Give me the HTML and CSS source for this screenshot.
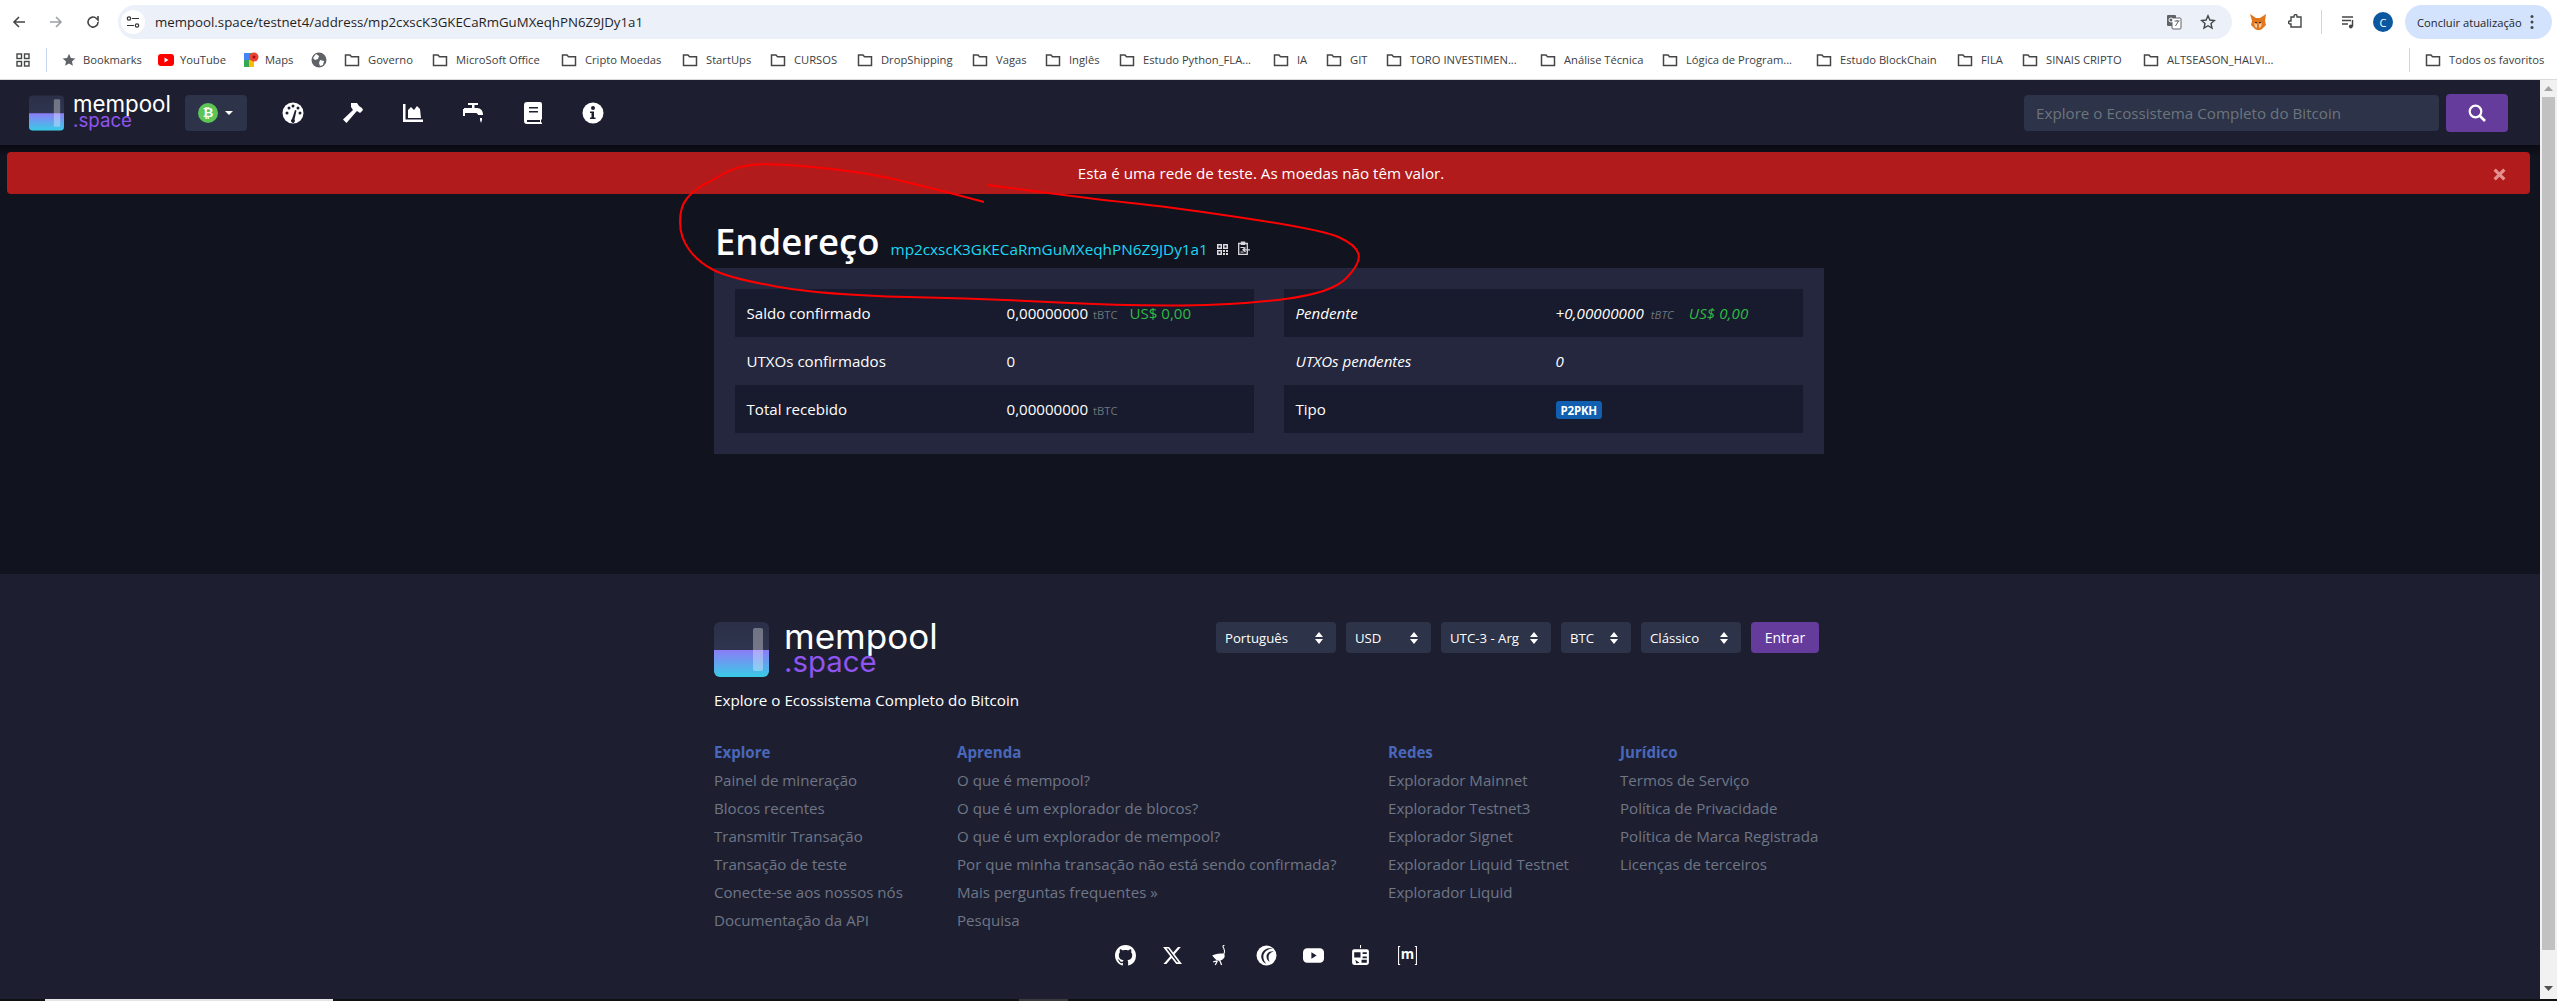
FILE: index.html
```html
<!DOCTYPE html>
<html lang="pt-BR">
<head>
<meta charset="utf-8">
<title>Endereço - mempool</title>
<link rel="stylesheet" href="styles.css">
</head>
<body>
<div class="toolbar">
  <div class="nav-btns">
    <svg class="ic16" viewBox="0 0 16 16"><path d="M14 8H3M8 3 3 8l5 5" fill="none" stroke="#444746" stroke-width="1.6"/></svg>
    <svg class="ic16" viewBox="0 0 16 16"><path d="M2 8h11M8 3l5 5-5 5" fill="none" stroke="#9aa0a6" stroke-width="1.6"/></svg>
    <svg class="ic16" viewBox="0 0 16 16"><path d="M13 8a5 5 0 1 1-1.5-3.5L13 6V2" fill="none" stroke="#444746" stroke-width="1.6"/></svg>
  </div>
  <div class="omnibox">
    <span class="tune"><svg class="ic14" viewBox="0 0 14 14"><g fill="none" stroke="#333" stroke-width="1.2"><circle cx="3" cy="3.5" r="1.7"/><path d="M6 3.5h7M1 10.5h7"/><circle cx="11" cy="10.5" r="1.7"/></g></svg></span>
    <span class="url">mempool.space/testnet4/address/mp2cxscK3GKECaRmGuMXeqhPN6Z9JDy1a1</span>
    <svg class="ic16 tr" viewBox="0 0 16 16"><rect x="1" y="1" width="9" height="11" rx="1" fill="#5f6368"/><rect x="6" y="4" width="9" height="11" rx="1" fill="#fff" stroke="#5f6368"/><path d="M8.500 7h5M11 6v1M9.500 12l3-5" stroke="#5f6368" fill="none"/><circle cx="5" cy="6" r="2" fill="none" stroke="#fff"/></svg>
    <svg class="ic16 st" viewBox="0 0 16 16"><path d="m8 1.800 1.900 4.200 4.500.5-3.400 3 1 4.500L8 11.700 4 14l1-4.500-3.400-3 4.500-.5z" fill="none" stroke="#444746" stroke-width="1.400"/></svg>
  </div>
  <div class="tool-right">
    <svg class="fox" viewBox="0 0 18 18"><path d="M1 1l6 4h4l6-4-1 7 1 4-4 4-2 1H8l-2-1-4-4 1-4z" fill="#e2761b"/><path d="M5 10l3 1v4l-2-1zM13 10l-3 1v4l2-1z" fill="#f6c9a0"/><path d="M6 9h2v1H6zM10 9h2v1h-2z" fill="#233447"/></svg>
    <svg class="ic16 puz" viewBox="0 0 16 16"><path d="M3 3h3V2a1.500 1.500 0 0 1 3 0v1h4v10H3v-3H2a1.500 1.500 0 0 1 0-3h1z" fill="none" stroke="#444746" stroke-width="1.400"/></svg>
    <span class="tool-div"></span>
    <svg class="ic16 media" viewBox="0 0 16 16"><path d="M1 3h11M1 6.500h9M1 10h6" stroke="#444746" stroke-width="1.500"/><path d="M11.500 6v6.500" stroke="#444746" stroke-width="1.500"/><circle cx="9.800" cy="12.500" r="1.900" fill="#444746"/></svg>
    <span class="avatar">C</span>
    <span class="update">Concluir atualização<svg class="kebab" viewBox="0 0 4 16"><circle cx="2" cy="2.500" r="1.500"/><circle cx="2" cy="8" r="1.500"/><circle cx="2" cy="13.500" r="1.500"/></svg></span>
  </div>
</div>

<div class="bookmarks">
  <span class="bm"><svg class="ic14" viewBox="0 0 14 14"><g fill="none" stroke="#444746" stroke-width="1.400"><rect x="1" y="1" width="4.500" height="4.500"/><rect x="8.500" y="1" width="4.500" height="4.500"/><rect x="1" y="8.500" width="4.500" height="4.500"/><rect x="8.500" y="8.500" width="4.500" height="4.500"/></g></svg></span>
  <span class="bm"><i class="bm-div"></i></span>
  <span class="bm bm-star"><svg class="ic14" viewBox="0 0 14 14"><path d="m7 .8 1.900 4.100 4.400.5-3.300 3 .9 4.400L7 10.600 3.100 12.800 4 8.400.7 5.400l4.400-.5z" fill="#5f6368"/></svg>Bookmarks</span>
  <span class="bm bm-tight"><svg class="ic16" viewBox="0 0 16 16"><rect y="2" width="16" height="12" rx="3" fill="#f00"/><path d="m6.500 5.500 4 2.500-4 2.500z" fill="#fff"/></svg>YouTube</span>
  <span class="bm bm-tight"><svg class="ic16" viewBox="0 0 16 16"><path d="M1 1h10v14H1z" fill="#34a853"/><path d="M1 1h5v7H1z" fill="#4285f4"/><path d="M6 8h5v7H6z" fill="#fbbc04"/><circle cx="11" cy="5" r="4.500" fill="#ea4335"/><circle cx="11" cy="5" r="1.500" fill="#a50e0e"/></svg>Maps</span>
  <span class="bm"><svg class="ic16" viewBox="0 0 16 16"><circle cx="8" cy="8" r="7.500" fill="#5f6368"/><path d="M5 2l3 2-1 3-3 1-2-2zM9 8l4 1-1 4-3 1-1-3z" fill="#fff"/></svg></span>
  <span class="bm"><svg class="ic16 folder" viewBox="0 0 16 16"><use href="#folder"/></svg>Governo</span>
  <span class="bm"><svg class="ic16 folder" viewBox="0 0 16 16"><use href="#folder"/></svg>MicroSoft Office</span>
  <span class="bm"><svg class="ic16 folder" viewBox="0 0 16 16"><use href="#folder"/></svg>Cripto Moedas</span>
  <span class="bm"><svg class="ic16 folder" viewBox="0 0 16 16"><use href="#folder"/></svg>StartUps</span>
  <span class="bm"><svg class="ic16 folder" viewBox="0 0 16 16"><use href="#folder"/></svg>CURSOS</span>
  <span class="bm"><svg class="ic16 folder" viewBox="0 0 16 16"><use href="#folder"/></svg>DropShipping</span>
  <span class="bm"><svg class="ic16 folder" viewBox="0 0 16 16"><use href="#folder"/></svg>Vagas</span>
  <span class="bm"><svg class="ic16 folder" viewBox="0 0 16 16"><use href="#folder"/></svg>Inglês</span>
  <span class="bm"><svg class="ic16 folder" viewBox="0 0 16 16"><use href="#folder"/></svg>Estudo Python_FLA...</span>
  <span class="bm"><svg class="ic16 folder" viewBox="0 0 16 16"><use href="#folder"/></svg>IA</span>
  <span class="bm"><svg class="ic16 folder" viewBox="0 0 16 16"><use href="#folder"/></svg>GIT</span>
  <span class="bm"><svg class="ic16 folder" viewBox="0 0 16 16"><use href="#folder"/></svg>TORO INVESTIMEN...</span>
  <span class="bm"><svg class="ic16 folder" viewBox="0 0 16 16"><use href="#folder"/></svg>Análise Técnica</span>
  <span class="bm"><svg class="ic16 folder" viewBox="0 0 16 16"><use href="#folder"/></svg>Lógica de Program...</span>
  <span class="bm"><svg class="ic16 folder" viewBox="0 0 16 16"><use href="#folder"/></svg>Estudo BlockChain</span>
  <span class="bm"><svg class="ic16 folder" viewBox="0 0 16 16"><use href="#folder"/></svg>FILA</span>
  <span class="bm"><svg class="ic16 folder" viewBox="0 0 16 16"><use href="#folder"/></svg>SINAIS CRIPTO</span>
  <span class="bm"><svg class="ic16 folder" viewBox="0 0 16 16"><use href="#folder"/></svg>ALTSEASON_HALVI...</span>
  <span class="bm"><i class="bm-div"></i></span>
  <span class="bm"><svg class="ic16 folder" viewBox="0 0 16 16"><use href="#folder"/></svg>Todos os favoritos</span>
</div>

<svg class="defs" width="0" height="0" aria-hidden="true">
  <defs>
    <symbol id="folder" viewBox="0 0 16 16"><path d="M1.500 3h4.500l1.500 1.800h7v8.700h-13z" fill="none" stroke="#444746" stroke-width="1.500"/></symbol>
    <linearGradient id="lg" x1="0" y1="0" x2="0" y2="1"><stop offset="0" stop-color="#8c7cf7"/><stop offset="1" stop-color="#38cbe6"/></linearGradient>
    <linearGradient id="lt" x1="0" y1="0" x2="0" y2="1"><stop offset="0" stop-color="#2b3048"/><stop offset="1" stop-color="#343a55"/></linearGradient>
    <symbol id="logo" viewBox="0 0 55 55">
      <rect width="55" height="55" rx="6" fill="url(#lt)"/>
      <path d="M0 28h55v21a6 6 0 0 1-6 6H6a6 6 0 0 1-6-6z" fill="url(#lg)"/>
      <rect x="39" y="6" width="10" height="43" rx="2" fill="#fff" fill-opacity=".33"/>
    </symbol>
  </defs>
</svg>

<div class="viewport">
  <div class="page">
    <header class="topbar">
      <a class="brand">
        <svg class="logo-sm"><use href="#logo"/></svg>
        <span class="word word-sm"><span class="w-m">mempool</span><span class="w-s">.space</span></span>
      </a>
      <div class="netbtn"><span class="btc">₿</span><i class="caret"></i></div>
      <nav class="mainnav">
        <svg class="navic" viewBox="0 0 22 22"><circle cx="11" cy="11" r="10.500" fill="#fff"/><g fill="#1d1f31"><circle cx="5" cy="11" r="1.500"/><circle cx="7" cy="6" r="1.500"/><circle cx="11" cy="4" r="1.500"/><circle cx="16" cy="6" r="1.500"/><circle cx="18" cy="11" r="1.500"/><path d="M10 17l3-9 1.500.5L12.500 17.500a2 2 0 1 1-2.500-.5z"/></g></svg>
        <svg class="navic" viewBox="0 0 22 22"><path d="M9 1h6l2 3 3 2 1 2-3 3-3-2-1 1L4.500 21 1 17.500 11 8 9 5z" fill="#fff"/></svg>
        <svg class="navic" viewBox="0 0 22 22"><path d="M1 2h2.500v15.500H21V20H1z" fill="#fff"/><path d="M6 16V8l3-3 3 3 3-4 3 3 1 9z" fill="#fff"/></svg>
        <svg class="navic" viewBox="0 0 22 22"><path d="M6 1h10v2h-3.500v3H15c4 0 6 3 6 7h-5c0-1-1-2-2-2H2V6h8V3H6z" fill="#fff"/><rect x="1" y="7" width="2" height="7" fill="#fff"/><path d="M18 16h2v2l-1 3-1-3z" fill="#fff"/></svg>
        <svg class="navic" viewBox="0 0 22 22"><path d="M5 0h13a2 2 0 0 1 2 2v15l-1 1v2l1 1v1H5a3 3 0 0 1-3-3V3a3 3 0 0 1 3-3z" fill="#fff"/><path d="M7 5h9v1.500H7zM7 9h9v1.500H7z" fill="#1d1f31"/><path d="M5 18h13v2H5z" fill="#1d1f31"/></svg>
        <svg class="navic" viewBox="0 0 22 22"><circle cx="11" cy="11" r="10.500" fill="#fff"/><g fill="#1d1f31"><circle cx="11" cy="6" r="2"/><path d="M8 9.500h4v6h1.500V17h-5.500v-1.500H9.500V11H8z"/></g></svg>
      </nav>
      <div class="search">
        <span class="search-in">Explore o Ecossistema Completo do Bitcoin</span>
        <span class="search-btn"><svg class="ic18" viewBox="0 0 18 18"><circle cx="7.500" cy="7.500" r="5.800" fill="none" stroke="#fff" stroke-width="2.200"/><path d="m12 12 5 5" stroke="#fff" stroke-width="2.600"/></svg></span>
      </div>
    </header>

    <main class="content">
      <div class="alert">
        <span>Esta é uma rede de teste. As moedas não têm valor.</span>
        <svg class="close" viewBox="0 0 12 12"><path d="m1.500 1.500 9 9m0-9-9 9" stroke="#e58f8f" stroke-width="3"/></svg>
      </div>

      <div class="container">
        <div class="title-row">
          <h1>Endereço</h1>
          <a class="addr">mp2cxscK3GKECaRmGuMXeqhPN6Z9JDy1a1</a>
          <svg class="qr" viewBox="0 0 11 11"><g fill="#fff" fill-opacity=".85"><path d="M0 0h5v5H0zM6 0h5v5H6zM0 6h5v5H0z"/><path d="M6 6h2v2H6zM9 6h2v2H9zM6 9h2v2H6zM9 9h2v2H9z"/></g><g fill="#11131f"><rect x="1.500" y="1.500" width="2" height="2"/><rect x="7.500" y="1.500" width="2" height="2"/><rect x="1.500" y="7.500" width="2" height="2"/></g></svg>
          <svg class="clip" viewBox="0 0 12 14"><path d="M.7 2.500h8.600v11H.7z" fill="none" stroke="#d8d8dc" stroke-width="1.300"/><rect x="2.800" y=".5" width="4.400" height="3.500" fill="#d8d8dc"/><path d="M2.500 6.500h4M2.500 11h3" stroke="#d8d8dc"/><path d="M5 8.800h7M7.500 6.500 5 8.800l2.500 2.300" fill="none" stroke="#d8d8dc" stroke-width="1.300"/></svg>
        </div>

        <section class="box">
          <div class="tbl">
            <div class="row odd"><span>Saldo confirmado</span><span class="val">0,00000000 <small>tBTC</small><b class="fiat">US$ 0,00</b></span></div>
            <div class="row"><span>UTXOs confirmados</span><span class="val">0</span></div>
            <div class="row odd"><span>Total recebido</span><span class="val">0,00000000 <small>tBTC</small></span></div>
          </div>
          <div class="tbl">
            <div class="row odd it"><span>Pendente</span><span class="val">+0,00000000 <small>tBTC</small><b class="fiat">US$ 0,00</b></span></div>
            <div class="row it"><span>UTXOs pendentes</span><span class="val">0</span></div>
            <div class="row odd"><span>Tipo</span><span class="val"><b class="badge">P2PKH</b></span></div>
          </div>
        </section>
      </div>

      <svg class="scribble" viewBox="0 0 700 160">
        <path d="M304 37Q222 15 193.500 10Q165 5 126.500 1.500Q88 -2 71.500 0Q55 2 44 8.500Q33 15 23 20Q13 26 6.500 34Q0 42 0 57Q0 72 9 84.500Q18 97 33.500 105Q49 113 96 121.500Q143 130 227.500 132Q312 134 379 137.500Q446 141 502 140.500Q558 140 605 134Q652 128 666.500 113Q681 98 678.500 89Q676 80 659.500 72.500Q643 65 567 53.500Q491 42 446.500 37.500Q402 33 308 20" fill="none" stroke="#f00" stroke-width="2"/>
      </svg>
    </main>

    <footer class="foot">
      <div class="foot-in">
        <div class="foot-top">
          <a class="brand">
            <svg class="logo-lg"><use href="#logo"/></svg>
            <span class="word word-lg"><span class="w-m">mempool</span><span class="w-s">.space</span></span>
          </a>
          <div class="controls">
            <span class="sel sel-a">Português<svg class="updown" viewBox="0 0 8 12"><path d="M4 0l4 5H0zM4 12l4-5H0z"/></svg></span>
            <span class="sel sel-b">USD<svg class="updown" viewBox="0 0 8 12"><path d="M4 0l4 5H0zM4 12l4-5H0z"/></svg></span>
            <span class="sel sel-c">UTC-3 - Arg<svg class="updown" viewBox="0 0 8 12"><path d="M4 0l4 5H0zM4 12l4-5H0z"/></svg></span>
            <span class="sel sel-d">BTC<svg class="updown" viewBox="0 0 8 12"><path d="M4 0l4 5H0zM4 12l4-5H0z"/></svg></span>
            <span class="sel sel-e">Clássico<svg class="updown" viewBox="0 0 8 12"><path d="M4 0l4 5H0zM4 12l4-5H0z"/></svg></span>
            <span class="enter">Entrar</span>
          </div>
        </div>
        <p class="tag">Explore o Ecossistema Completo do Bitcoin</p>
        <div class="links">
          <ul>
            <li class="lh">Explore</li><li>Painel de mineração</li><li>Blocos recentes</li><li>Transmitir Transação</li><li>Transação de teste</li><li>Conecte-se aos nossos nós</li><li>Documentação da API</li>
          </ul>
          <ul>
            <li class="lh">Aprenda</li><li>O que é mempool?</li><li>O que é um explorador de blocos?</li><li>O que é um explorador de mempool?</li><li>Por que minha transação não está sendo confirmada?</li><li>Mais perguntas frequentes »</li><li>Pesquisa</li>
          </ul>
          <ul>
            <li class="lh">Redes</li><li>Explorador Mainnet</li><li>Explorador Testnet3</li><li>Explorador Signet</li><li>Explorador Liquid Testnet</li><li>Explorador Liquid</li>
          </ul>
          <ul>
            <li class="lh">Jurídico</li><li>Termos de Serviço</li><li>Política de Privacidade</li><li>Política de Marca Registrada</li><li>Licenças de terceiros</li>
          </ul>
        </div>
        <div class="social">
          <svg class="soc" viewBox="0 0 16 16"><path fill="#fff" d="M8 0C3.58 0 0 3.58 0 8c0 3.54 2.29 6.53 5.47 7.59.4.07.55-.17.55-.38 0-.19-.01-.82-.01-1.49-2.01.37-2.53-.49-2.69-.94-.09-.23-.48-.94-.82-1.13-.28-.15-.68-.52-.01-.53.63-.01 1.08.58 1.23.82.72 1.21 1.87.87 2.33.66.07-.52.28-.87.51-1.07-1.78-.2-3.64-.89-3.64-3.95 0-.87.31-1.59.82-2.15-.08-.2-.36-1.02.08-2.12 0 0 .67-.21 2.2.82.64-.18 1.32-.27 2-.27.68 0 1.36.09 2 .27 1.53-1.04 2.2-.82 2.2-.82.44 1.1.16 1.92.08 2.12.51.56.82 1.27.82 2.15 0 3.07-1.87 3.75-3.65 3.95.29.25.54.73.54 1.48 0 1.07-.01 1.93-.01 2.2 0 .21.15.46.55.38A8.013 8.013 0 0016 8c0-4.42-3.58-8-8-8z"/></svg>
          <svg class="soc" viewBox="0 0 24 24"><path fill="#fff" d="M18.244 2.25h3.308l-7.227 8.26 8.502 11.24H16.17l-5.214-6.817L4.99 21.750H1.680l7.730-8.835L1.254 2.250H8.080l4.713 6.231zm-1.161 17.520h1.833L7.084 4.126H5.117z"/></svg>
          <svg class="soc" viewBox="0 0 20 20"><g fill="none" stroke="#fff"><path d="M15 0c-2 0-2 2-1 3 1 2 1 4 0 6" stroke-width="1"/><path d="M8 15l-2 4M10 14l2 5M8 15l-4 1" stroke-width="1.200"/></g><path d="M3 10c3-2 8-2 11-2l1 2c0 3-3 5-6 5-2 0-4-3-6-5z" fill="#fff"/></svg>
          <svg class="soc" viewBox="0 0 20 20"><circle cx="10" cy="10" r="9.500" fill="#fff"/><path d="M16 3c-5-1-11 2-11 8 0 3 2 6 5 7-2-2-3-4-3-7 0-4 4-7 9-8z" fill="#1d1f31"/><path d="M17 6c-4-.5-7 2-7 5 0 2 1 4 3 5-1-2-1-3-1-5 0-2 2-4 5-5z" fill="#1d1f31"/></svg>
          <svg class="soc" viewBox="0 0 20 20"><rect y="3" width="20" height="14" rx="4" fill="#fff"/><path d="m8 7 5 3-5 3z" fill="#1d1f31"/></svg>
          <svg class="soc" viewBox="0 0 20 20"><path d="M10 0v3" stroke="#fff"/><rect x="2" y="4" width="16" height="15" rx="2" fill="#fff"/><path d="M4 7h6v5H4zM12 7h4v1.500h-4zM12 11h4v1.500h-4zM5 14l4 3-3 .5zM11 14h5v3h-5z" fill="#1d1f31"/></svg>
          <svg class="soc" viewBox="0 0 20 20"><path d="M3 1.500H1.500v17H3M17 1.500h1.500v17H17" fill="none" stroke="#fff"/><text class="matrix-m" x="10" y="13.500" text-anchor="middle">m</text></svg>
        </div>
      </div>
    </footer>
  </div>

  <div class="scrollbar">
    <svg class="arrow" viewBox="0 0 9 5"><path d="M4.500 0 9 5H0z" fill="#a3a3a3"/></svg>
    <div class="thumb"></div>
    <svg class="arrow" viewBox="0 0 9 5"><path d="M4.500 5 9 0H0z" fill="#505050"/></svg>
  </div>
</div>
<div class="taskstrip"><span class="ts-a"></span><span class="ts-b"></span></div>
</body>
</html>
```

FILE: styles.css
```css
* { box-sizing: border-box; }
html, body { margin: 0; padding: 0; height: 1001px; overflow: hidden; }
body { font-family: "Open Sans", "Noto Sans", sans-serif; background: #fff; color: #fff; font-size: 15.100px; }
svg { display: block; flex: none; }
.defs { position: absolute; }
.ic14 { width: 14px; height: 14px; }
.ic16 { width: 16px; height: 16px; }
.ic18 { width: 18px; height: 18px; }

/* browser chrome */
.toolbar { height: 40px; background: #fff; display: flex; align-items: center; padding-top: 4px; padding-left: 11px; }
.nav-btns { display: flex; gap: 21px; width: 107px; }
.omnibox { width: 2114px; height: 34px; background: #ecf0f9; border-radius: 17px; display: flex; align-items: center; padding-left: 3px; color: #1f1f1f; }
.tune { width: 24px; height: 24px; background: #fff; border-radius: 50%; display: flex; align-items: center; justify-content: center; margin-right: 10px; }
.url { font-size: 13.250px; flex: 1; white-space: nowrap; }
.tr { margin-right: 18px; }
.st { margin-right: 16px; }
.tool-right { display: flex; align-items: center; margin-left: 17px; flex: 1; }
.fox { width: 18px; height: 18px; margin-right: 21px; }
.puz { margin-right: 17px; }
.tool-div { width: 1px; height: 24px; background: #c7d7f3; margin-right: 19px; }
.media { margin-right: 16px; }
.avatar { width: 20px; height: 20px; background: #0b57a0; border-radius: 50%; color: #fff; font-size: 11px; display: flex; align-items: center; justify-content: center; margin-right: 12px; }
.update { width: 147px; height: 34px; border-radius: 17px; background: #d3e3fd; color: #1f1f1f; font-size: 11.200px; display: flex; align-items: center; padding-left: 12px; white-space: nowrap; gap: 8px; }
.kebab { width: 4px; height: 16px; fill: #444746; }

.bookmarks { height: 40px; background: #fff; border-bottom: 1px solid #d9dadc; display: grid; grid-template-columns: 30px 16px 96px 85px 68px 33px 88px 129px 121px 88px 87px 115px 73px 74px 154px 53px 60px 154px 122px 154px 141px 65px 121px 266px 16px 1fr; padding-left: 16px; align-items: center; }
.bm { display: flex; align-items: center; gap: 8px; color: #3c4043; font-size: 11.200px; white-space: nowrap; overflow: hidden; }
.bm-star { gap: 7px; }
.bm-tight { gap: 6px; }
.bm-div { display: block; width: 1px; height: 24px; background: #c7d7f3; }

/* page */
.viewport { height: 919px; display: flex; }
.page { flex: 1; min-width: 0; background: #11131f; display: flex; flex-direction: column; }
.scrollbar { width: 17px; background: #f1f1f1; display: flex; flex-direction: column; align-items: center; padding-top: 6px; }
.arrow { width: 9px; height: 5px; }
.thumb { width: 13px; height: 853px; background: #c1c1c1; margin: 6px 0 36px; }
.taskstrip { height: 2px; background: #0f1113; display: flex; padding-left: 45px; }
.ts-a { width: 288px; background: #e6e6e6; }
.ts-b { width: 49px; margin-left: 686px; background: #3a3a3e; }

.topbar { height: 65px; background: #1d1f31; display: flex; align-items: center; padding: 0 32px 0 29px; flex: none; }
.brand { display: flex; }
.logo-sm { width: 35px; height: 36px; }
.logo-lg { width: 55px; height: 55px; }
.word { display: flex; flex-direction: column; font-family: "Inter", sans-serif; font-weight: 400; }
.word-sm { margin-left: 9px; font-size: 22.300px; line-height: 17px; width: 100px; }
.word-lg { margin-left: 15px; font-size: 35px; line-height: 25px; margin-top: 2px; }
.w-m { color: #fff; }
.w-s { color: #8f55ee; font-size: .84em; }
.netbtn { margin-left: 12px; width: 62px; height: 36px; background: #2d3348; border-radius: 4px; display: flex; align-items: center; padding-left: 13px; gap: 7px; }
.btc { width: 20px; height: 20px; border-radius: 50%; background: #5cc556; color: #fff; font-family: "DejaVu Sans", sans-serif; font-weight: 700; font-size: 13px; display: flex; align-items: center; justify-content: center; }
.caret { width: 0; height: 0; border-left: 4px solid transparent; border-right: 4px solid transparent; border-top: 4px solid #fff; }
.mainnav { margin-left: 35px; display: flex; gap: 38px; }
.navic { width: 22px; height: 22px; }
.search { margin-left: auto; display: flex; align-items: center; gap: 7px; }
.search-in { width: 415px; height: 36px; background: #2d3348; border-radius: 4px; color: #6c757d; padding-left: 12px; display: flex; align-items: center; font-size: 15.200px; }
.search-btn { width: 62px; height: 38px; background: #653b9c; border-radius: 4px; display: flex; align-items: center; justify-content: center; }

.content { flex: 1; padding-top: 7px; position: relative; background: linear-gradient(#090a12, #11131f 12px); }
.alert { height: 42px; margin: 0 10px 0 7px; padding-right: 15px; background: #b11b1b; border-radius: 4px; display: flex; align-items: center; justify-content: center; position: relative; font-size: 15.200px; }
.close { width: 13px; height: 13px; position: absolute; right: 24px; top: 16px; }
.container { width: 1110px; margin: 0 auto; position: relative; left: -1px; }
.title-row { display: flex; align-items: baseline; height: 74px; padding-top: 22px; }
h1 { margin: 0 0 0 1px; font-size: 36.500px; font-weight: 600; line-height: 50px; }
.addr { margin-left: 11px; color: #1bd8f4; font-size: 15.300px; }
.qr { width: 11px; height: 11px; margin-left: 9px; }
.clip { width: 12px; height: 14px; margin-left: 10px; }
.box { background: #24273e; padding: 21px; display: grid; grid-template-columns: 519px 519px; gap: 30px; }
.row { height: 48px; display: grid; grid-template-columns: 260px 1fr; align-items: center; padding-left: 11.500px; white-space: nowrap; }
.odd { background: #181b2d; }
.it { font-style: italic; }
.val small { color: #6c757d; font-size: 11.200px; margin-left: 1px; }
.fiat { color: #2fba45; font-weight: 400; margin-left: 12px; }
.it .val { letter-spacing: .1px; }
.it .val small { margin-left: 3px; }
.it .fiat { margin-left: 15px; }
.badge { display: inline-flex; align-items: center; height: 18px; padding: 0 5px; background: #105fb0; border-radius: 3px; font-size: 11.500px; font-weight: 700; letter-spacing: -.2px; vertical-align: middle; }
.scribble { position: absolute; left: 680px; top: 20px; width: 700px; height: 160px; pointer-events: none; overflow: visible; }

.foot { height: 425px; background: #1d1f31; flex: none; }
.foot-in { width: 1110px; margin: 0 auto; position: relative; left: -1px; padding-top: 48px; }
.foot-top { display: flex; justify-content: space-between; padding-right: 5px; height: 55px; }
.controls { display: flex; gap: 10px; height: 31px; font-size: 13.200px; }
.sel { background: #2d3348; border-radius: 4px; display: flex; align-items: center; justify-content: space-between; padding: 0 13px 0 9px; white-space: nowrap; }
.sel-a { width: 120px; }
.sel-b { width: 85px; }
.sel-c { width: 110px; }
.sel-d { width: 70px; }
.sel-e { width: 100px; }
.updown { width: 8px; height: 12px; fill: #fff; }
.enter { width: 68px; background: #653b9c; border-radius: 4px; display: flex; align-items: center; justify-content: center; font-size: 14px; }
.tag { margin: 9px 0 0; line-height: 28px; font-size: 15.200px; }
.links { display: grid; grid-template-columns: 243px 431px 232px 1fr; margin-top: 24px; height: 196px; }
.links ul { list-style: none; margin: 0; padding: 0; }
.links li { line-height: 28px; color: #6f7686; white-space: nowrap; font-size: 15.100px; }
.links .lh { color: #4a68b9; font-weight: 700; }
.social { display: flex; justify-content: center; align-items: center; gap: 26px; margin-top: 10px; height: 22px; padding-right: 5px; }
.soc { width: 21px; height: 21px; }
.matrix-m { font-family: "Open Sans", sans-serif; font-weight: 700; font-size: 13px; fill: #fff; }
```
